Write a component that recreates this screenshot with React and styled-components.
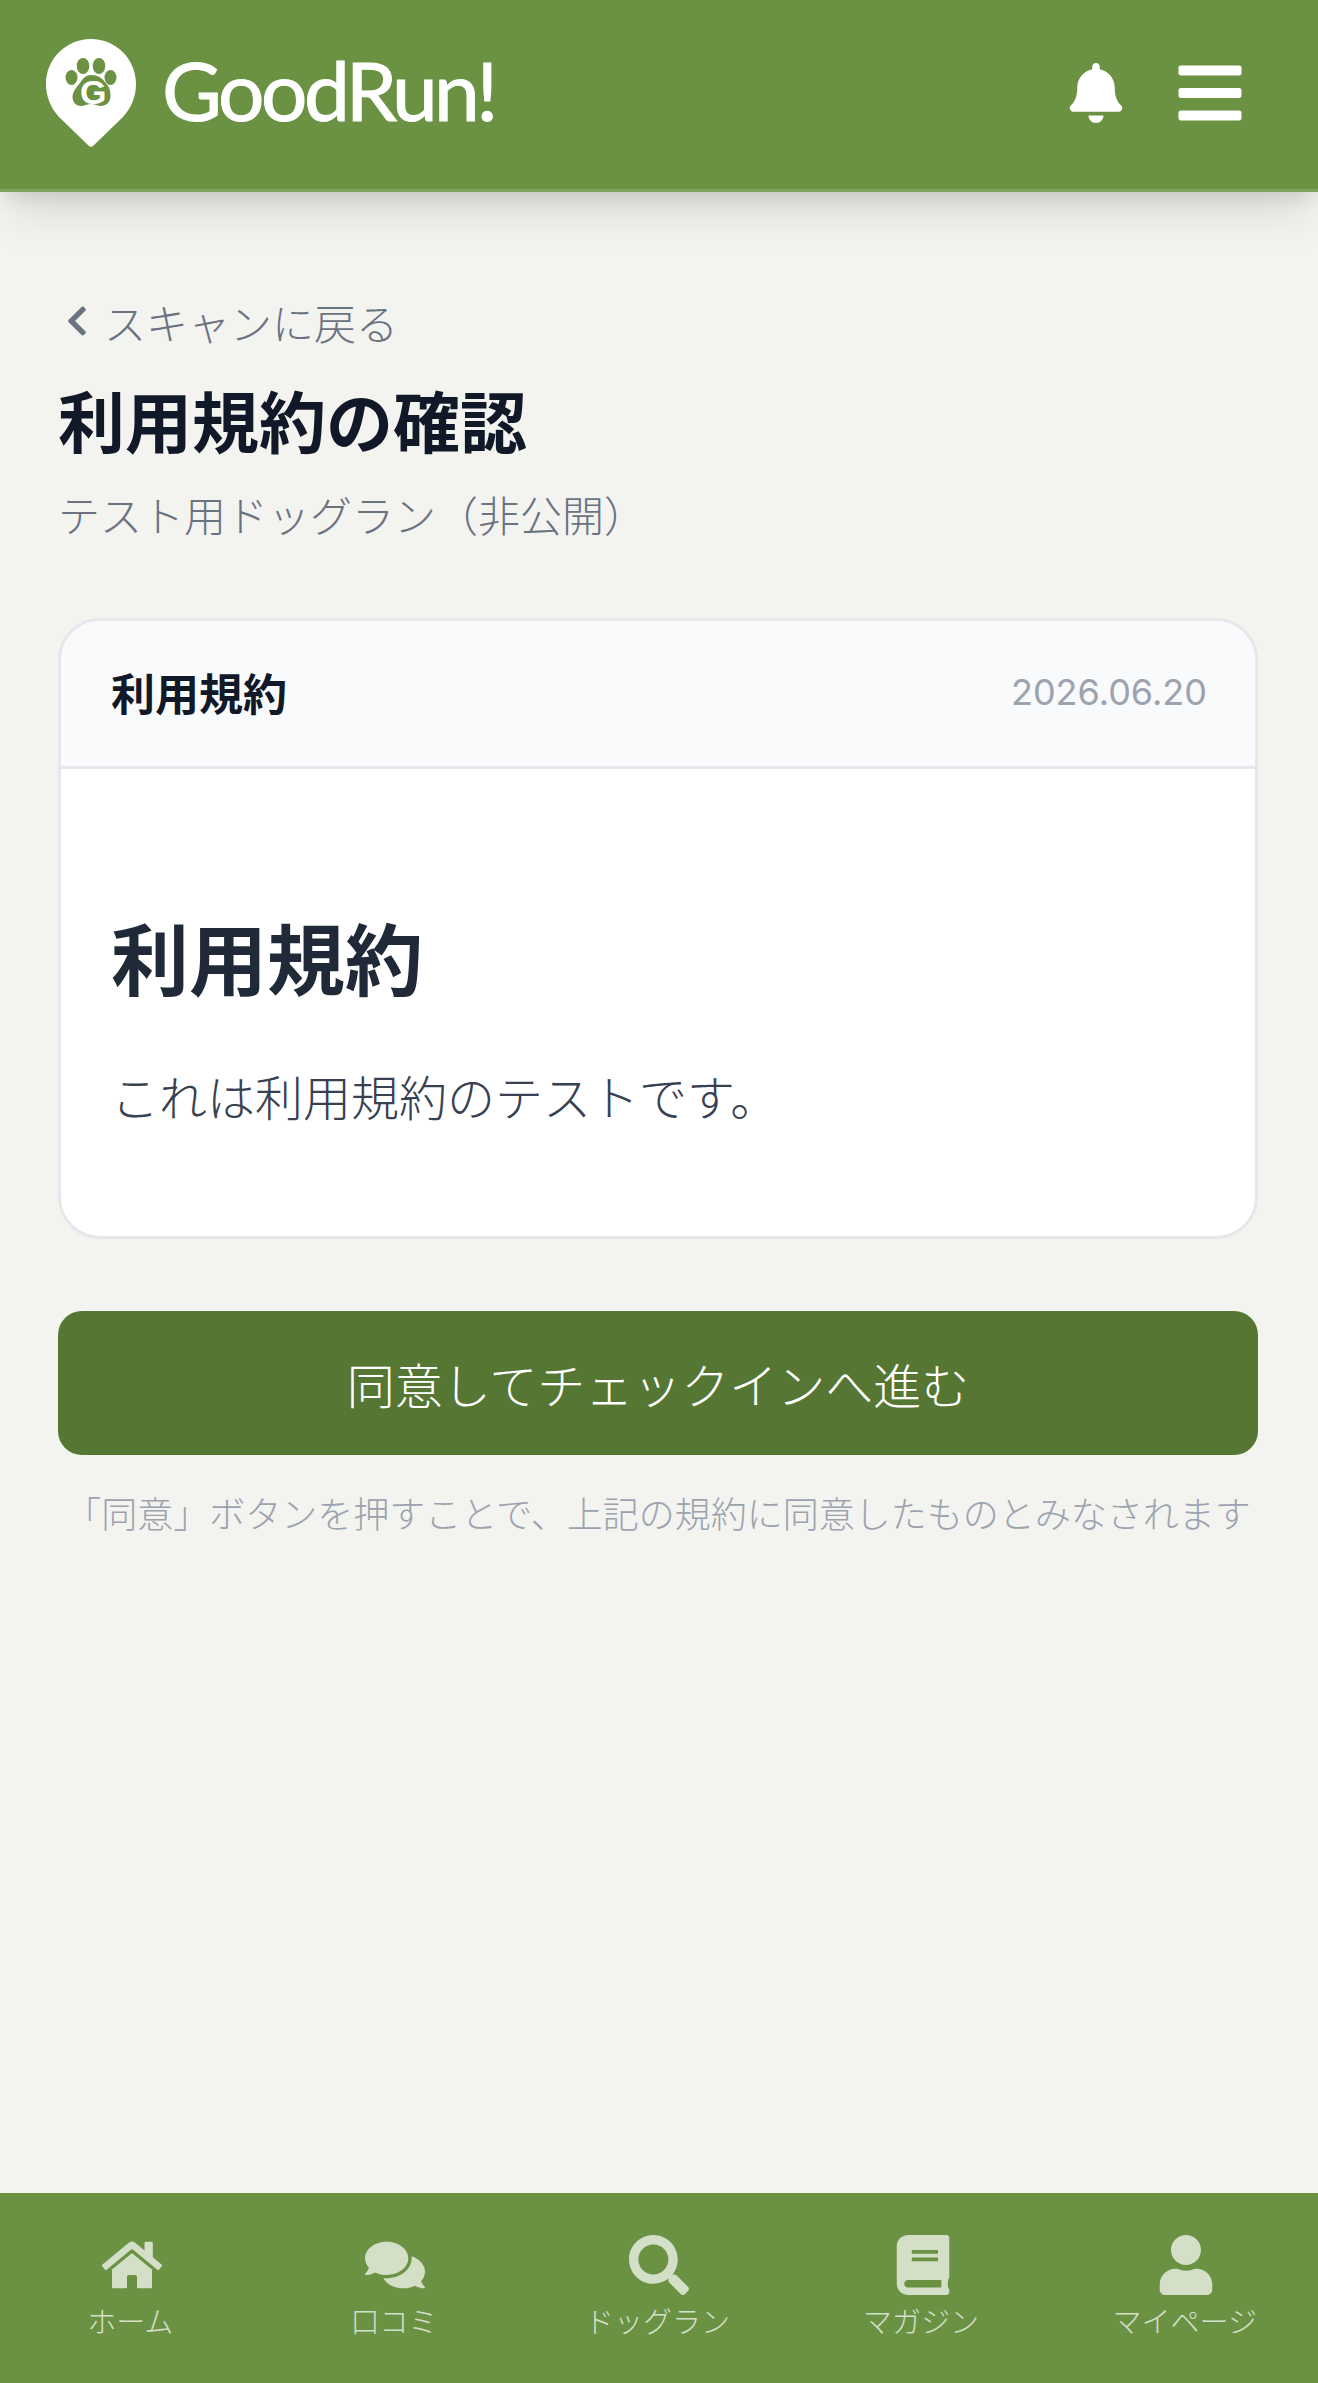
import React from 'react';
import styled, { createGlobalStyle } from 'styled-components';
import { FaBell, FaBars, FaChevronLeft, FaHome, FaComments, FaSearch, FaBook, FaUser } from 'react-icons/fa';

const GlobalStyle = createGlobalStyle`
  html, body {
    margin: 0;
    padding: 0;
    background: #f3f4f0;
  }
  body {
    font-family: Inter, "Noto Sans CJK JP", sans-serif;
  }
  * {
    box-sizing: border-box;
  }
`;

const Page = styled.div`
  min-height: 2383px;
  display: flex;
  flex-direction: column;
`;

const Header = styled.header`
  position: relative;
  z-index: 2;
  height: 192px;
  flex-shrink: 0;
  display: flex;
  align-items: flex-start;
  justify-content: space-between;
  padding: 39px 72px 0 46px;
  background: #6b9143;
  border-bottom: 3px solid #7fa35f;
  box-shadow: 0 30px 45px -9px rgba(0, 0, 0, 0.1), 0 12px 18px -6px rgba(0, 0, 0, 0.1);
`;

const Logo = styled.div`
  display: flex;
  align-items: flex-start;
  gap: 26px;
`;

const LogoMark = styled.svg`
  width: 90px;
  height: 108px;
  flex-shrink: 0;
`;

const LogoText = styled.span`
  margin-top: 0;
  font-family: Lato, sans-serif;
  font-size: 82px;
  line-height: 100px;
  font-weight: 400;
  letter-spacing: -3.5px;
  color: #fff;
  -webkit-text-stroke: 1px #fff;
`;

const HeaderActions = styled.div`
  display: flex;
  align-items: center;
  gap: 48px;
  height: 108px;
`;

const BellIcon = styled(FaBell)`
  width: 60px;
  height: 60px;
  color: #fff;
`;

const MenuIcon = styled(FaBars)`
  width: 72px;
  height: 72px;
  color: #fff;
`;

const Main = styled.main`
  flex: 1;
  padding: 0 60px 0 58px;
`;

const BackLink = styled.a`
  display: flex;
  align-items: center;
  gap: 10px;
  margin-top: 99px;
  height: 60px;
  font-size: 42px;
  font-weight: 300;
  color: #6b7280;
  text-decoration: none;
`;

const BackIcon = styled(FaChevronLeft)`
  width: 34px;
  height: 34px;
  margin-left: 2px;
`;

const Title = styled.h1`
  margin: 31px 0 0;
  font-size: 67px;
  line-height: 84px;
  font-weight: 700;
  color: #111827;
`;

const Subtitle = styled.p`
  margin: 25px 0 0;
  font-size: 42px;
  line-height: 52px;
  font-weight: 300;
  color: #6b7280;
`;

const Card = styled.section`
  margin-top: 75px;
  background: #fff;
  border: 3px solid #e5e7eb;
  border-radius: 42px;
  overflow: hidden;
`;

const CardHeader = styled.div`
  height: 148px;
  display: flex;
  align-items: center;
  justify-content: space-between;
  padding: 0 48px 3px 50px;
  background: #f9fafb;
  border-bottom: 3px solid #e5e7eb;
`;

const CardLabel = styled.span`
  font-size: 44px;
  font-weight: 700;
  color: #111827;
`;

const CardDate = styled.span`
  font-size: 36px;
  color: #9ca3af;
`;

const CardBody = styled.div`
  padding: 147px 48px 91px 50px;
`;

const BodyHeading = styled.h2`
  margin: 0;
  font-size: 78px;
  line-height: 92px;
  font-weight: 700;
  color: #1f2937;
`;

const BodyText = styled.p`
  margin: 45px 0 0;
  font-size: 48px;
  line-height: 92px;
  font-weight: 300;
  color: #374151;
`;

const AgreeButton = styled.button`
  display: block;
  width: 100%;
  height: 144px;
  margin-top: 72px;
  border: 0;
  border-radius: 24px;
  background: #557733;
  font-family: inherit;
  font-size: 48px;
  font-weight: 300;
  color: #fff;
`;

const Note = styled.p`
  margin: 36px 0 0;
  font-size: 36px;
  line-height: 48px;
  font-weight: 300;
  text-align: center;
  white-space: nowrap;
  color: #9ca3af;
`;

const BottomNav = styled.nav`
  height: 190px;
  flex-shrink: 0;
  display: grid;
  grid-template-columns: repeat(5, 1fr);
  background: #6b9143;
`;

const NavItem = styled.a`
  display: flex;
  flex-direction: column;
  align-items: center;
  padding-top: 42px;
  gap: 7px;
  color: #d3dfc7;
  text-decoration: none;
  svg {
    width: 60px;
    height: 60px;
  }
`;

const NavLabel = styled.span`
  margin-right: 3px;
  font-size: 29px;
  line-height: 42px;
  font-weight: 300;
`;

const navItems = [
  { label: 'ホーム', Icon: FaHome },
  { label: '口コミ', Icon: FaComments },
  { label: 'ドッグラン', Icon: FaSearch },
  { label: 'マガジン', Icon: FaBook },
  { label: 'マイページ', Icon: FaUser },
];

// pin with a paw print and the G set on the pad
const PinLogo = () => (
  <LogoMark viewBox="0 0 90 108">
    <path
      d="M45 0C20 0 0 20 0 45c0 13 5 24 13 33l30 29c1 1 3 1 4 0l30-29c8-9 13-20 13-33C90 20 70 0 45 0z"
      fill="#fff"
    />
    <g fill="#6b9143">
      <ellipse cx="25.5" cy="38.5" rx="6" ry="7.5" />
      <ellipse cx="37" cy="27" rx="6.3" ry="8" />
      <ellipse cx="53" cy="27" rx="6.3" ry="8" />
      <ellipse cx="64.5" cy="38.5" rx="6" ry="7.5" />
      <path d="M45 36c-5 0-8 3-11 8-4 5-7.500 9-7.500 14 0 5 3.500 9 8.500 9 3 0 6-2 10-2s7 2 10 2c5 0 9.500-4 9.500-10 0-5-1-9-4-12-4-6-9-9-15.500-9z" />
    </g>
    <text x="34" y="65" fontFamily="Liberation Sans, sans-serif" fontSize="34" fontWeight="700" fill="#fff">G</text>
  </LogoMark>
);

const App = () => (
  <>
    <GlobalStyle />
    <Page>
      <Header>
        <Logo>
          <PinLogo />
          <LogoText>GoodRun!</LogoText>
        </Logo>
        <HeaderActions>
          <BellIcon />
          <MenuIcon />
        </HeaderActions>
      </Header>
      <Main>
        <BackLink href="#">
          <BackIcon />
          スキャンに戻る
        </BackLink>
        <Title>利用規約の確認</Title>
        <Subtitle>テスト用ドッグラン（非公開）</Subtitle>
        <Card>
          <CardHeader>
            <CardLabel>利用規約</CardLabel>
            <CardDate>2026.06.20</CardDate>
          </CardHeader>
          <CardBody>
            <BodyHeading>利用規約</BodyHeading>
            <BodyText>これは利用規約のテストです。</BodyText>
          </CardBody>
        </Card>
        <AgreeButton>同意してチェックインへ進む</AgreeButton>
        <Note>「同意」ボタンを押すことで、上記の規約に同意したものとみなされます</Note>
      </Main>
      <BottomNav>
        {navItems.map(({ label, Icon }) => (
          <NavItem key={label} href="#">
            <Icon />
            <NavLabel>{label}</NavLabel>
          </NavItem>
        ))}
      </BottomNav>
    </Page>
  </>
);

export default App;
